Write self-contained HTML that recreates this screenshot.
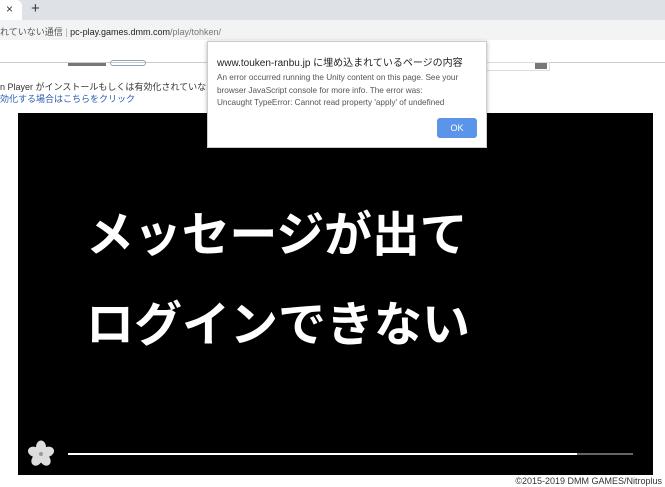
<!DOCTYPE html>
<html><head><meta charset="utf-8"><style>
*{margin:0;padding:0;box-sizing:border-box}
body{width:665px;height:487px;overflow:hidden;background:#fff;position:relative;font-family:"Liberation Sans","Noto Sans CJK JP",sans-serif}
.abs{position:absolute}
</style></head><body>
<div class="abs" style="left:0;top:0;width:665px;height:20px;background:#dee1e6"></div>
<div class="abs" style="left:0;top:0;width:22px;height:20px;background:#fff;border-radius:0 6px 0 0"></div>
<div class="abs" style="left:6px;top:2px;font-size:12px;color:#333">×</div>
<div class="abs" style="left:31px;top:0px;font-size:15px;color:#333">+</div>
<div class="abs" style="left:0;top:20px;width:665px;height:20px;background:#f1f3f4"></div>
<div class="abs" style="left:0;top:25px;font-size:9px;color:#555;white-space:nowrap">れていない通信 <span style="color:#aaa">|</span> <span style="color:#222">pc-play.games.dmm.com</span><span style="color:#777">/play/tohken/</span></div>
<div class="abs" style="left:0;top:62px;width:665px;height:1px;background:#ccc"></div>
<div class="abs" style="left:68px;top:63px;width:38px;height:3px;background:#777"></div>
<div class="abs" style="left:110px;top:60px;width:36px;height:6px;border:1px solid #8ab;border-radius:3px"></div>
<div class="abs" style="left:480px;top:62px;width:70px;height:9px;border:1px solid #ddd"></div>
<div class="abs" style="left:535px;top:63px;width:12px;height:6px;background:#777"></div>
<div class="abs" style="left:0;top:80px;font-size:9px;color:#333;white-space:nowrap">n Player がインストールもしくは有効化されていないため、ク</div>
<div class="abs" style="left:0;top:92px;font-size:9px;color:#2a5db0;white-space:nowrap">効化する場合はこちらをクリック</div>
<div class="abs" style="left:18px;top:113px;width:635px;height:362px;background:#000"></div>
<div class="abs" style="left:86px;top:195px;font-size:48px;font-weight:bold;color:#fff;white-space:nowrap;letter-spacing:-0.2px">メッセージが出て</div>
<div class="abs" style="left:86px;top:285px;font-size:48px;font-weight:bold;color:#fff;white-space:nowrap;letter-spacing:0">ログインできない</div>
<div class="abs" style="left:68px;top:453px;width:509px;height:2px;background:#fff"></div>
<div class="abs" style="left:577px;top:453px;width:56px;height:2px;background:#666"></div>
<svg class="abs" style="left:27px;top:440px" width="28" height="28" viewBox="-14 -14 28 28">
<g fill="#ddd"><ellipse cx="0" cy="-7" rx="5" ry="6.5"/><ellipse cx="0" cy="-7" rx="5" ry="6.5" transform="rotate(72)"/><ellipse cx="0" cy="-7" rx="5" ry="6.5" transform="rotate(144)"/><ellipse cx="0" cy="-7" rx="5" ry="6.5" transform="rotate(216)"/><ellipse cx="0" cy="-7" rx="5" ry="6.5" transform="rotate(288)"/></g><circle r="2" fill="#999"/></svg>
<div class="abs" style="right:3px;top:476px;font-size:9px;color:#333;white-space:nowrap">©2015-2019 DMM GAMES/Nitroplus</div>
<div class="abs" style="left:207px;top:41px;width:280px;height:107px;background:#fff;border:1px solid #ccc;box-shadow:0 1px 4px rgba(0,0,0,.3)"></div>
<div class="abs" style="left:217px;top:54px;font-size:10px;color:#222;white-space:nowrap">www.touken-ranbu.jp に埋め込まれているページの内容</div>
<div class="abs" style="left:217px;top:72px;font-size:8.2px;line-height:12.5px;color:#555;white-space:nowrap">An error occurred running the Unity content on this page. See your<br>browser JavaScript console for more info. The error was:<br>Uncaught TypeError: Cannot read property 'apply' of undefined</div>
<div class="abs" style="left:437px;top:118px;width:40px;height:20px;background:#5b95ea;border-radius:3px;color:#fff;font-size:9px;text-align:center;line-height:20px">OK</div>
</body></html>
